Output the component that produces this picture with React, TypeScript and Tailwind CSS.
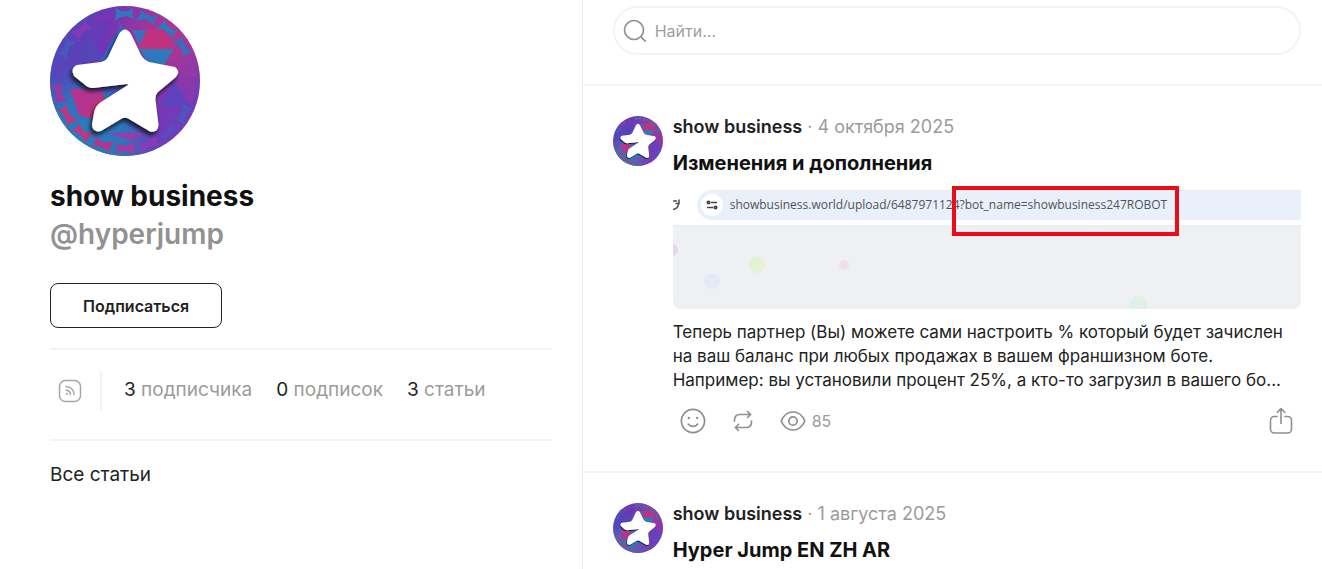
import React from 'react'

type Post = {
  id: number;
  date: string;
  title: string;
  lines?: string[];
  views?: number;
}

const posts: Post[] = [
  {
    id: 1,
    date: "4 октября 2025",
    title: "Изменения и дополнения",
    lines: [
      "Теперь партнер (Вы) можете сами настроить % который будет зачислен",
      "на ваш баланс при любых продажах в вашем франшизном боте.",
      "Например: вы установили процент 25%, а кто-то загрузил в вашего бо...",
    ],
    views: 85,
  },
  { id: 2, date: "1 августа 2025", title: "Hyper Jump EN ZH AR" },
];

const stats = [
  { count: 3, label: "подписчика" },
  { count: 0, label: "подписок" },
  { count: 3, label: "статьи" },
];

// colours of the small wings round the edge, clockwise from the top
const ring = [
  "#2f78bd", "#3272bd", "#2f78bd", "#346fbd", "#8f3aa6", "#8a3aa8", "#4f55bd", "#5a4cc0",
  "#8a3aba", "#a8389c", "#b8348c", "#c0357f", "#c0357f", "#a0369a", "#5d42bd", "#4858bd", "#8a36b5", "#7a35b5",
];

const star =
  "M69 28Q75 19 81 28L91 49Q94 54 99 56L125 61Q131 65 126 71L108 86Q105 89 105.500 94L108.500 119Q108 127 100 125.500L79 113Q75 110.500 71 113L51 125Q43 127 42 119L44 107Q45 100 51 96L78 79Q79 78 77 78L43 82Q38 82 34 78L24 70Q20 62 27 59L51 56Q56 55 58 51Z";

const Avatar = ({ id, className }: { id: string; className: string }) => (
  <svg viewBox="0 0 150 150" className={className} aria-hidden="true">
    <defs>
      <linearGradient id={`${id}-bg`} x1="0" y1="0.300" x2="1" y2="0.700">
        <stop offset="0" stopColor="#4a4cb8" />
        <stop offset="0.300" stopColor="#6d35b8" />
        <stop offset="0.700" stopColor="#7b38b4" />
        <stop offset="1" stopColor="#6d3cbc" />
      </linearGradient>
      <radialGradient id={`${id}-pink`} cx="0.800" cy="0.200" r="0.450">
        <stop offset="0" stopColor="#b8348a" />
        <stop offset="1" stopColor="#b8348a" stopOpacity="0" />
      </radialGradient>
      <radialGradient id={`${id}-blue`} cx="0.250" cy="0.850" r="0.500">
        <stop offset="0" stopColor="#2a7cba" />
        <stop offset="0.500" stopColor="#2f74bb" />
        <stop offset="1" stopColor="#3b62bd" stopOpacity="0" />
      </radialGradient>
      <clipPath id={`${id}-clip`}>
        <circle cx="75" cy="75" r="75" />
      </clipPath>
      <filter id={`${id}-shadow`} x="-20%" y="-20%" width="140%" height="140%">
        <feDropShadow dx="-1.500" dy="3" stdDeviation="2" floodColor="#07071c" floodOpacity="0.950" />
      </filter>
    </defs>
    <g clipPath={`url(#${id}-clip)`}>
      <rect width="150" height="150" fill={`url(#${id}-bg)`} />
      <rect width="150" height="150" fill={`url(#${id}-pink)`} />
      <rect width="150" height="150" fill={`url(#${id}-blue)`} />
      <path d="M40 29L54 55H27Z" fill="#5546b8" />
      <path d="M71 18L90 55H50Z" fill="#3a64bf" />
      <path d="M82 24H97L90 41Z" fill="#3a6fc0" />
      <path d="M97 23H112L124 43H88Z" fill="#c0327f" />
      <path d="M88 43H124L108 68Z" fill="#2f78bb" />
      <path d="M124 75L138 100H110Z" fill="#5e43bf" />
      <path d="M20 83H52L36 110H29Z" fill="#b5348f" />
      <path d="M52 84L34 112H58Z" fill="#c0347f" />
      <path d="M58 127H96L80 134Z" fill="#9c39ad" />
      {ring.map((color, i) => (
        <path
          key={i}
          d="M65 2L71 5H79L84 1Q81 7 84 13L77 10L71 11L64 15Q68 8 65 2Z"
          fill={color}
          transform={`rotate(${i * 20} 75 75)`}
        />
      ))}
      <path d={star} fill="#fff" filter={`url(#${id}-shadow)`} />
    </g>
  </svg>
);

const RssIcon = () => (
  <svg viewBox="0 0 24 24" className="size-6" fill="none" stroke="#a6a6a6" strokeWidth="1.500">
    <rect x="1.500" y="1.500" width="21" height="21" rx="6" />
    <path d="M8 7.500c4.500 0 8 3.500 8 8M8 11.200c2.500 0 4.300 1.800 4.300 4.300" strokeLinecap="round" />
    <circle cx="8.800" cy="14.800" r="1.100" fill="#a6a6a6" stroke="none" />
  </svg>
);

const SmileIcon = () => (
  <svg viewBox="0 0 26 26" className="size-[26px]" fill="none" stroke="#8f8f8f" strokeWidth="1.700" strokeLinecap="round">
    <circle cx="13" cy="13" r="11.600" />
    <path d="M8.200 16.100c1.200 1.700 2.900 2.300 4.800 2.300s3.600-.6 4.800-2.300" />
    <circle cx="8.800" cy="10" r="1.200" fill="#8f8f8f" stroke="none" />
    <circle cx="17.200" cy="10" r="1.200" fill="#8f8f8f" stroke="none" />
  </svg>
);

const RepostIcon = () => (
  <svg viewBox="0 0 22 24" className="h-6 w-[22px]" fill="none" stroke="#8f8f8f" strokeWidth="1.700" strokeLinecap="round" strokeLinejoin="round">
    <path d="M2.500 12V10.500a5 5 0 0 1 5-5H18.500M15.500 2.500l3.200 3-3.200 3" />
    <path d="M19.500 12v1.500a5 5 0 0 1-5 5H3.500M6.500 15.500l-3.200 3 3.200 3" />
  </svg>
);

const EyeIcon = () => (
  <svg viewBox="0 0 26 22" className="h-[22px] w-[26px]" fill="none" stroke="#8f8f8f" strokeWidth="1.700">
    <path d="M1.200 11C3.700 5 8 2 13 2s9.300 3 11.800 9c-2.500 6-6.800 9-11.800 9S3.700 17 1.200 11Z" strokeLinejoin="round" />
    <circle cx="13" cy="11" r="4.200" />
  </svg>
);

const ShareIcon = () => (
  <svg viewBox="0 0 24 28" className="h-7 w-6" fill="none" stroke="#8f8f8f" strokeWidth="1.600" strokeLinecap="round" strokeLinejoin="round">
    <path d="M8 9.500H5.500a4 4 0 0 0-4 4V22a4 4 0 0 0 4 4h13a4 4 0 0 0 4-4v-8.500a4 4 0 0 0-4-4H16" />
    <path d="M12 16.500V2M8.300 5.300L12 1.600l3.700 3.700" />
  </svg>
);

const AddressPreview = () => (
  <div className="bg-white">
    <div className="flex h-[30px] items-center">
      <svg viewBox="0 0 8 14" className="h-3.5 w-2 shrink-0" fill="none" stroke="#555" strokeWidth="1.600">
        <path d="M0 3.500c1-1 3-.8 4 0M6 1.500v4H2.500M5.500 5.500c0 3-2 5.500-5.500 6" />
      </svg>
      <div className="ml-4 flex h-full flex-1 items-center rounded-l-full bg-[#eaf0fa] pl-1">
        <span className="flex size-[22px] shrink-0 items-center justify-center rounded-full bg-white">
          <svg viewBox="0 0 12 12" className="size-3" fill="none" stroke="#444" strokeWidth="1.700">
            <path d="M5 3.500h6M1 8.500h6" />
            <circle cx="2.500" cy="3.500" r="1.200" />
            <circle cx="9.500" cy="8.500" r="1.200" />
          </svg>
        </span>
        <p className="ml-[7px] font-['Open_Sans',sans-serif] text-xs whitespace-nowrap text-[#505358]">
          showbusiness.world/upload/6487971124
          <span className="relative">
            ?bot_name=showbusiness247ROBOT
            <span className="absolute -top-2.5 -right-3 -bottom-[23px] -left-2 border-4 border-[#ec0c18]" />
          </span>
        </p>
      </div>
    </div>
    <svg viewBox="0 0 628 84" preserveAspectRatio="xMinYMin slice" className="mt-[5px] block h-[84px] w-full rounded-b-lg bg-[#eff0f4]">
      <path d="M0 .5h1400" stroke="#e9ecec" />
      <circle cx="-1" cy="25" r="6" fill="#e3d6f5" />
      <circle cx="84" cy="40" r="8" fill="#e4f1d3" />
      <circle cx="39" cy="56" r="8" fill="#e2eaf6" />
      <circle cx="171" cy="40" r="5" fill="#f1dfe8" />
      <circle cx="465" cy="80" r="9" fill="#dff0e5" />
    </svg>
  </div>
);

const PostCard = ({ post }: { post: Post }) => (
  <article className="flex gap-[10px] border-b-2 border-[#f3f3f3] pt-[29px] pr-[21px] pb-9 pl-[30px]">
    <Avatar id={`post-${post.id}`} className="mt-px size-[50px] shrink-0" />
    <div className="min-w-0 flex-1">
      <p className="text-lg leading-6 text-[#9b9b9b]">
        <a href="#" className="font-semibold text-[#222]">show business</a> · {post.date}
      </p>
      <h2 className="mt-3 text-xl leading-6 font-bold text-[#111]">{post.title}</h2>
      {post.lines && (
        <>
          <div className="mt-[15px]">
            <AddressPreview />
          </div>
          <p className="mt-[11px] text-[17px] leading-6 text-[#222]">
            {post.lines.map((line) => (
              <span key={line} className="block truncate">{line}</span>
            ))}
          </p>
          <div className="mt-[15px] flex items-center pr-2 pl-[7px] text-[#9b9b9b]">
            <button type="button" aria-label="Реакция"><SmileIcon /></button>
            <button type="button" aria-label="Репост" className="ml-[26px]"><RepostIcon /></button>
            <span className="ml-[26px] flex items-center gap-[6px] text-base">
              <EyeIcon />
              {post.views}
            </span>
            <button type="button" aria-label="Поделиться" className="ml-auto"><ShareIcon /></button>
          </div>
        </>
      )}
    </div>
  </article>
);

const App = () => {
  return (
    <div className="flex h-screen overflow-hidden bg-white font-[Inter,sans-serif]">
      <aside className="w-[44%] shrink-0 pt-[6px] pr-[30px] pl-[50px]">
        <Avatar id="profile" className="size-[150px]" />
        <h1 className="mt-[21px] text-[28px] leading-[38px] font-bold text-[#111]">show business</h1>
        <p className="text-[28px] leading-[38px] font-semibold text-[#929292]">@hyperjump</p>
        <button
          type="button"
          className="mt-[30px] h-[45px] rounded-lg border border-[#222] px-8 text-base font-semibold text-[#222]"
        >
          Подписаться
        </button>
        <div className="mt-5 flex items-center border-y-2 border-[#f3f3f3] pt-[21px] pb-[29px] text-[19px]">
          <a href="#" aria-label="RSS" className="mx-2"><RssIcon /></a>
          <span className="ml-[10px] h-[39px] w-0.5 bg-[#f3f3f3]" />
          <ul className="ml-[22px] flex gap-6">
            {stats.map((stat) => (
              <li key={stat.label} className="text-[#9b9b9b]">
                <span className="text-[#222]">{stat.count}</span> {stat.label}
              </li>
            ))}
          </ul>
        </div>
        <nav className="mt-5">
          <a href="#" className="text-[19px] text-[#222]">Все статьи</a>
        </nav>
      </aside>
      <main className="min-w-0 flex-1 border-l border-[#ececec]">
        <div className="border-b-2 border-[#f3f3f3] pt-[6px] pr-[21px] pb-[29px] pl-[30px]">
          <label className="flex h-[49px] items-center rounded-full border-2 border-[#f3f3f3] pl-2">
            <svg viewBox="0 0 24 24" className="size-6 shrink-0" fill="none" stroke="#929292" strokeWidth="1.700">
              <circle cx="11" cy="11" r="9.500" />
              <path d="M17.700 17.700l5 5" />
            </svg>
            <input
              type="text"
              aria-label="Найти"
              placeholder="Найти..."
              className="ml-2 min-w-0 flex-1 bg-transparent text-base outline-none placeholder:text-[#a0a0a0]"
            />
          </label>
        </div>
        {posts.map((post) => (
          <PostCard key={post.id} post={post} />
        ))}
      </main>
    </div>
  );
}
export default App
